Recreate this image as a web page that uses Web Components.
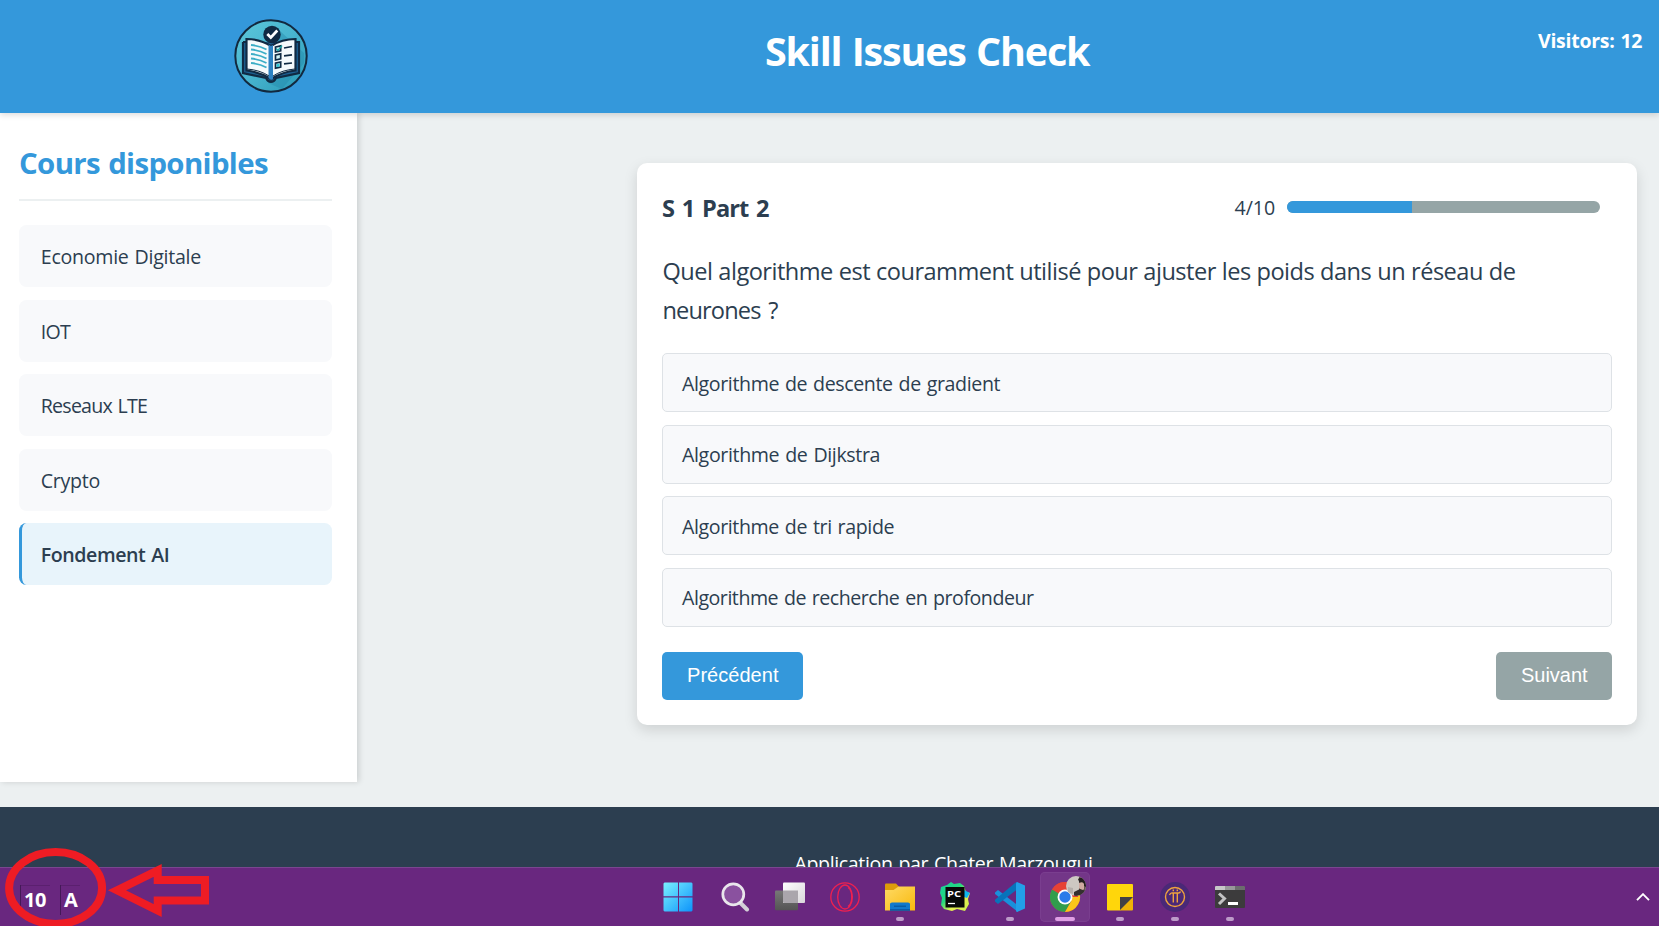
<!DOCTYPE html>
<html lang="fr">
<head>
<meta charset="utf-8">
<title>Skill Issues Check</title>
<style>
html,body{margin:0;height:926px;overflow:hidden}
body{font-family:"Open Sans","Noto Sans",sans-serif;font-size:19.6px;color:#2c3e50;background:#ecf0f1}
</style>
</head>
<body>
<desk-screen>
  <quiz-app></quiz-app>
  <task-bar slot="bar"></task-bar>
  <pen-marks slot="marks"></pen-marks>
</desk-screen>
<script>
const define = (name, html, ready) => customElements.define(name, class extends HTMLElement {
  connectedCallback() {
    if (this.shadowRoot) return;
    this.attachShadow({ mode: 'open' }).innerHTML = html;
    if (ready) ready(this, this.shadowRoot);
  }
});

/* Text spaced out to a given line length. */
define('fit-text', `<style>:host{display:inline-block;white-space:nowrap;word-spacing:1.200px}</style><slot></slot>`, el => {
  const w = +el.getAttribute('w');
  const n = el.textContent.length;
  const natural = el.getBoundingClientRect().width;
  if (w && n > 1) el.style.letterSpacing = ((w - natural) / (n - 1)).toFixed(3) + 'px';
});

define('app-logo', `<style>:host{display:block;width:74px;height:74px}svg{display:block}</style>
<svg width="74" height="74" viewBox="0 0 74 74">
  <defs><linearGradient id="g" x1="0" y1="0" x2="1" y2="1"><stop offset="0" stop-color="#5cc7da"/><stop offset=".5" stop-color="#48b4cf"/><stop offset="1" stop-color="#2898b5"/></linearGradient></defs>
  <circle cx="37" cy="37" r="35.7" fill="url(#g)" stroke="#12293f" stroke-width="2"/>
  <path d="M45 11L70 34v10L48 70 34 64z" fill="#2389aa" opacity=".45"/>
  <path d="M9 23h5M9 23V54L32 59q2 4 5 4t5-4L65 54V23h-5" fill="#1d6092" stroke="#102a43" stroke-width="2.2"/>
  <path d="M12.500 20Q26 20 37 27V60Q26 53 12.500 51.500z" fill="#f5fafc" stroke="#102a43" stroke-width="2.2"/>
  <path d="M61.500 20Q48 20 37 27V60Q48 53 61.500 51.500z" fill="#f5fafc" stroke="#102a43" stroke-width="2.2"/>
  <path d="M34.500 25.500L37 27l2-1v34l-2 1-2.500-2z" fill="#2d82c2"/>
  <path d="M17 26q9 1 15.500 4.500M17 30.500q9 1 15.500 4.500M17 35q9 1 15.500 4.500M17 39.500q9 1 15.500 4.500M17 44q9 1 15.500 4.500" fill="none" stroke="#3badc6" stroke-width="1.800"/>
  <path d="M13 50q13 1 22 7M61 50q-13 1-22 7" fill="none" stroke="#102a43" stroke-width="1"/>
  <path d="M41.500 28l5.200-1.200v5L41.500 33zM41.500 36l5.200-1.200v5L41.500 41zM41.500 44.200l5.200-1.200v5l-5.200 1.200z" fill="#d4f5f7" stroke="#102a43" stroke-width="1.700"/>
  <path d="M42 29.500l2 2 4-5" fill="none" stroke="#18a3a5" stroke-width="1.300"/>
  <path d="M42.500 45.200l3-.6v3l-3 .6z" fill="#34c5d4"/>
  <path d="M50 29l8-1.500M50 36.800l8-1M50 44.800l8-.8" stroke="#102a43" stroke-width="1.700"/>
  <circle cx="38" cy="15.500" r="8.700" fill="#102a43"/>
  <path d="M33.300 15l3.500 3.500 6.500-7" fill="none" stroke="#fff" stroke-width="2.700"/>
</svg>`);

define('app-header', `<style>
:host{display:grid;grid-template-columns:540px 1fr 273px;height:113px;background:#3498db;color:#fff;box-shadow:0 2px 6px rgba(0,0,0,.14);position:relative;z-index:1;font-weight:700;box-sizing:border-box}
:host>*{box-sizing:border-box}
.logo{padding:19px 0 0 233.500px}
h1{margin:0;padding:21px 0 0 225px;font-size:39.500px;line-height:60px;white-space:nowrap}
.v{padding:27px 0 0 152px;line-height:27px;font-size:19.500px}
</style><div class="logo"><app-logo></app-logo></div><h1><fit-text w="325.500">Skill Issues Check</fit-text></h1><div class="v"><fit-text w="104.500">Visitors: 12</fit-text></div>`);

define('course-item', `<style>
:host{display:flex;align-items:center;height:62px;box-sizing:border-box;padding:1px 0 0 21.800px;border-radius:7.500px;background:#f8f9fb;border-left:0 solid #3498db}
:host([active]){background:#e8f4fb;border-left-width:3px;padding-left:18.800px;font-weight:600}
</style><slot></slot>`);

define('side-bar', `<style>
:host{display:block;width:357px;height:669px;box-sizing:border-box;padding:29px 25px 0 19px;background:#fff;box-shadow:2px 0 6px rgba(0,0,0,.14)}
h2{margin:0;height:57px;border-bottom:2px solid #ecf0f1;line-height:43px;font-size:29.400px;color:#3498db;white-space:nowrap}
nav{display:grid;gap:12.500px;padding-top:24px}
</style><h2><fit-text w="249.500">Cours disponibles</fit-text></h2>
<nav>
<course-item><fit-text w="160.500">Economie Digitale</fit-text></course-item>
<course-item><fit-text w="30">IOT</fit-text></course-item>
<course-item><fit-text w="107">Reseaux LTE</fit-text></course-item>
<course-item><fit-text w="59.500">Crypto</fit-text></course-item>
<course-item active><fit-text w="129">Fondement AI</fit-text></course-item>
</nav>`);

define('progress-meter', `<style>
:host{display:flex;align-items:center;gap:12px;height:24px}
.t{width:313px;height:12px;border-radius:6px;background:#95a5a6;overflow:hidden;margin-top:-1px}
.f{height:12px;width:40%;background:#3498db}
</style><slot></slot><div class="t"><div class="f"></div></div>`);

define('answer-option', `<style>
:host{display:flex;align-items:center;height:59px;box-sizing:border-box;padding:1.700px 0 0 19px;border:1px solid #dee2e6;border-radius:5px;background:#f8f9fb}
</style><slot></slot>`);

define('nav-button', `<style>
:host{display:block}
button{display:block;border:0;margin:0;height:48px;padding:0 24.500px 1px 25px;border-radius:5px;background:#3498db;color:#fff;font:20px "Liberation Sans",Arial,sans-serif}
:host([off]) button{background:#95a5a6}
</style><button><slot></slot></button>`);

define('quiz-card', `<style>
:host{display:block;width:1000px;height:562px;box-sizing:border-box;padding:32px 25px 25px;border-radius:10px;background:#fff;box-shadow:0 5px 14px rgba(0,0,0,.13)}
.top{display:flex;justify-content:space-between;padding-right:12px;height:57px}
h3{margin:0;font-size:23.600px;line-height:26px;white-space:nowrap}
h3 fit-text{word-spacing:2.500px}
.q{font-size:23.600px;line-height:39.300px;padding-left:.5px}
.o{display:grid;gap:12.600px;margin-top:22.400px}
.b{display:flex;justify-content:space-between;margin-top:25.200px}
</style>
<div class="top"><h3><fit-text w="107.500">S 1 Part 2</fit-text></h3><progress-meter><fit-text w="40.500">4/10</fit-text></progress-meter></div>
<div class="q"><span><fit-text style="word-spacing:.3px" w="853.500">Quel algorithme est couramment utilisé pour ajuster les poids dans un réseau de</fit-text></span><br><span><fit-text style="word-spacing:2.500px" w="116">neurones ?</fit-text></span></div>
<div class="o">
<answer-option><fit-text w="318.500">Algorithme de descente de gradient</fit-text></answer-option>
<answer-option><fit-text w="198.500">Algorithme de Dijkstra</fit-text></answer-option>
<answer-option><fit-text w="212.500">Algorithme de tri rapide</fit-text></answer-option>
<answer-option style="padding-top:1px"><fit-text w="352">Algorithme de recherche en profondeur</fit-text></answer-option>
</div>
<div class="b"><nav-button><fit-text w="91.500">Précédent</fit-text></nav-button><nav-button off><fit-text w="66.500">Suivant</fit-text></nav-button></div>`);

define('app-footer', `<style>
:host{display:block;height:119px;background:#2c3e50;color:#fff;box-sizing:border-box;padding:43px 0 0 794.500px;line-height:27px}
</style><fit-text w="298.500">Application par Chater Marzougui</fit-text>`);

define('quiz-app', `<style>
:host{display:block;height:867px;overflow:hidden;background:#ecf0f1}
main{display:flex;justify-content:space-between;height:694px;padding-right:22px}
quiz-card{margin-top:50px}
</style><app-header></app-header><main><side-bar></side-bar><quiz-card></quiz-card></main><app-footer></app-footer>`);

define('task-slot', `<style>
:host{display:grid;grid-template-rows:50px;place-items:center;width:50px;height:50px;border-radius:5px;box-sizing:border-box;position:relative}
:host([active]){background:#733688;box-shadow:inset 0 0 0 1px #7a3e8f}
:host([open])::after,:host([active])::after{content:"";position:absolute;bottom:1px;left:21px;width:8px;height:4px;border-radius:2px;background:#bd9bc9}
:host([active])::after{left:15px;width:20px;background:#df9fe5}
::slotted(svg){display:block}
</style><slot></slot>`);

define('lang-badge', `<style>
:host{display:block;box-sizing:border-box;height:30px;border:solid #431957;border-width:0 0 0 1px;background:linear-gradient(#5b206f,#5b206f) top/100% 1px no-repeat;padding-left:3px;line-height:30px;font-size:20px;font-weight:700;color:#fff}
</style><slot></slot>`);

define('task-bar', `<style>
:host{display:grid;grid-template-columns:655px 1fr 23px;height:59px;box-sizing:border-box;border-top:1px solid #7b4590;background:#69277f}
.l{display:flex;padding:17px 0 0 20px}
.l lang-badge:first-child{width:30px;margin-right:10px}
.l lang-badge:last-child{width:20px}
.m{display:flex;gap:5px;padding-top:4px}
.c{padding-top:25px}
svg{display:block}
.p{font:700 8.500px "Open Sans",sans-serif;fill:#fff}
</style>
<div class="l"><lang-badge><fit-text w="22.500">10</fit-text></lang-badge><lang-badge>A</lang-badge></div>
<div class="m">
<task-slot><svg width="30" height="30" viewBox="0 0 30 30" style="margin-left:-4px"><defs><linearGradient id="w" gradientUnits="userSpaceOnUse" x1="0" y1="0" x2="29" y2="29"><stop offset="0" stop-color="#7cf3ff"/><stop offset="1" stop-color="#0f95fb"/></linearGradient></defs><path d="M1.500.5H15v13.700H.5V1.500zM16 .5h12.500l1 1v12.700H16zM.5 15.500H15v14H1.500l-1-1zM16 15.500h13.500v13l-1 1H16z" fill="url(#w)"/></svg></task-slot>
<task-slot><svg width="30" height="30" viewBox="0 0 30 30"><path d="M20 20.500l7 7" stroke="#d3cfd7" stroke-width="4" stroke-linecap="round"/><circle cx="13.300" cy="12.300" r="10.500" fill="#8a519f" stroke="#e9e6ec" stroke-width="2.700"/></svg></task-slot>
<task-slot><svg width="30" height="30" viewBox="0 0 30 30"><defs><linearGradient id="a" x2="1" y2="1"><stop stop-color="#fff"/><stop offset="1" stop-color="#d9d6da"/></linearGradient><linearGradient id="b" x2="0" y2="1"><stop stop-color="#777"/><stop offset="1" stop-color="#545454"/></linearGradient></defs><rect y="8.500" width="23" height="19.800" rx="1" fill="url(#b)"/><rect x="8" y=".5" width="22" height="20.500" rx="1" fill="url(#a)"/><path d="M8 8.500h15V21H9l-1-1z" fill="#aaa6ac"/></svg></task-slot>
<task-slot><svg width="30" height="30" viewBox="0 0 30 30"><g fill="none" stroke="#f0204f" stroke-width="1.300"><circle cx="15" cy="15" r="14.200"/><ellipse cx="15" cy="15" rx="7.300" ry="12"/><path d="M18 5.500c5 3 5 16 0 19"/></g></svg></task-slot>
<task-slot open><svg width="30" height="30" viewBox="0 0 30 30"><defs><linearGradient id="f" x2="1" y2="1"><stop stop-color="#ffda65"/><stop offset="1" stop-color="#f8b90d"/></linearGradient></defs><path d="M0 9V2.500Q0 1.500 1 1.500h10l3 3.200L8 9z" fill="#dd9c0a"/><path d="M0 8h8.500l5-3.500H30v24H0z" fill="url(#f)"/><path d="M5 28.500V22q0-1.500 2-1.500h16q2 0 2 1.500v6.500z" fill="#1179cd"/><path d="M5 28h20" stroke="#0b529e" stroke-width="1.500"/><path d="M9 24.200h12" stroke="#07569d" stroke-width="1.200"/></svg></task-slot>
<task-slot><svg width="30" height="30" viewBox="0 0 30 30"><defs><linearGradient id="j" x2="1" y2="1"><stop stop-color="#16cf9c"/><stop offset=".4" stop-color="#25d97e"/><stop offset=".65" stop-color="#e8f04f"/><stop offset="1" stop-color="#c8f04e"/></linearGradient></defs><path d="M1 5l6-2 4-3 3 2 6-1 4 3 2 6 4 1-2 6 1 5-4 7-8-2-5 2-8-2-3-4 1-7-2-5z" fill="url(#j)"/><path d="M24 8l6 3-3 5-3-1z" fill="#10b6ef"/><rect x="5.500" y="5" width="19" height="20.500" fill="#080908"/><text class="p" x="7" y="14.500" textLength="14" lengthAdjust="spacingAndGlyphs">PC</text><path d="M8 21.500h7" stroke="#fff" stroke-width="1.300"/></svg></task-slot>
<task-slot open><svg width="30" height="30" viewBox="0 0 30 30"><path d="M0 10.500L3 8l20 15.500V30L0 12z" fill="#1990db"/><path d="M22 0v7.500L3 22 0 19.500v-1.700L20 1z" fill="#0873ba"/><path d="M22 0l8 3.500v23L22 30q-1-.5-1-1.500v-27Q21 .5 22 0z" fill="#229fe8"/></svg></task-slot>
<task-slot active><svg width="36" height="36" viewBox="0 0 36 36" style="margin:-6px 0 0 6px"><defs><clipPath id="k"><circle cx="26" cy="10" r="10"/></clipPath></defs><g transform="translate(0 6)"><circle cx="15" cy="15" r="15" fill="#e64235"/><path d="M15 15L2 7.500A15 15 0 0015 30l6.500-11.250z" fill="#319d4d"/><path d="M15 15h13V7.500H28A15 15 0 0115 30l6.500-11.250z" fill="#fbc51b"/><path d="M2 7.500A15 15 0 0128 7.500H15z" fill="#e64235"/><circle cx="15" cy="15" r="7.500" fill="#fff"/><circle cx="15" cy="15" r="5.700" fill="#2b7be9"/></g><g clip-path="url(#k)"><path d="M16 0h20v20H16z" fill="#cdc8c2"/><path d="M29 0h7v20h-7z" fill="#60544c"/><path d="M28 3q4-3 8 1v7l-3-2-3-1z" fill="#231e20"/><path d="M29 7q4-2 5 1v5l-2 2-3-3z" fill="#cfaaa0"/><path d="M24 16l6-3 6 2v5H24z" fill="#343030"/><path d="M18 11l5 1v6l-5-2z" fill="#b5afab"/></g></svg></task-slot>
<task-slot open><svg width="30" height="30" viewBox="0 0 30 30"><path d="M3 2h24q1 0 1 1v12L15 28.500H3q-1 0-1-1V3q0-1 1-1z" fill="#ffd60b"/><path d="M15 15h13v12.500q0 1-1 1H15z" fill="#efb306"/><path d="M15 15h13L15 28z" fill="#424044"/></svg></task-slot>
<task-slot open><svg width="30" height="30" viewBox="0 0 30 30"><circle cx="15" cy="15" r="15" fill="#4a2877"/><g fill="none" stroke="#efa33e" stroke-width="1.400"><circle cx="15" cy="15" r="9.500"/><path d="M9.500 13q1-2.500 3-2h6q1.500 0 2-1.500M13.300 11.500v9M17.300 11.500v9M13.300 7.500v1.700M17.300 7.500v1.700"/></g></svg></task-slot>
<task-slot open><svg width="30" height="30" viewBox="0 0 30 30"><path d="M0 5q0-1 1-1h28q1 0 1 1v20q0 1-1 1H1q-1 0-1-1z" fill="#3c3b3c"/><path d="M0 8V5q0-1 1-1h9v4z" fill="#c7c7c8"/><path d="M10 4h10v4H10z" fill="#98989a"/><path d="M20 4h9q1 0 1 1v3H20z" fill="#6c6c6e"/><path d="M4 11.500l5.500 5L4 22" fill="none" stroke="#c2c2c3" stroke-width="3"/><path d="M13 21.500h10" stroke="#fff" stroke-width="3"/></svg></task-slot>
</div>
<div class="c"><svg width="14" height="8" viewBox="0 0 14 8"><path d="M1 7.200l6-6 6 6" fill="none" stroke="#fff" stroke-width="1.900"/></svg></div>`);

define('pen-marks', `<style>:host{display:block}svg{display:block}</style>
<svg width="230" height="86" viewBox="0 840 230 86"><g fill="none" stroke="#ee1c24" stroke-width="8"><ellipse cx="55.600" cy="888" rx="46.500" ry="36"/><path d="M117 890.300L157.700 870.500V880H205v20.500H157.700v10z" stroke-linejoin="miter" stroke-miterlimit="2.500"/></g></svg>`);

define('desk-screen', `<style>
:host{display:grid;grid-template-rows:867px 59px;width:1659px;height:926px;overflow:hidden;position:relative}
.m{position:absolute;left:0;bottom:0;z-index:3;pointer-events:none}
</style><slot></slot><slot name="bar"></slot><div class="m"><slot name="marks"></slot></div>`);
</script>
</body>
</html>
